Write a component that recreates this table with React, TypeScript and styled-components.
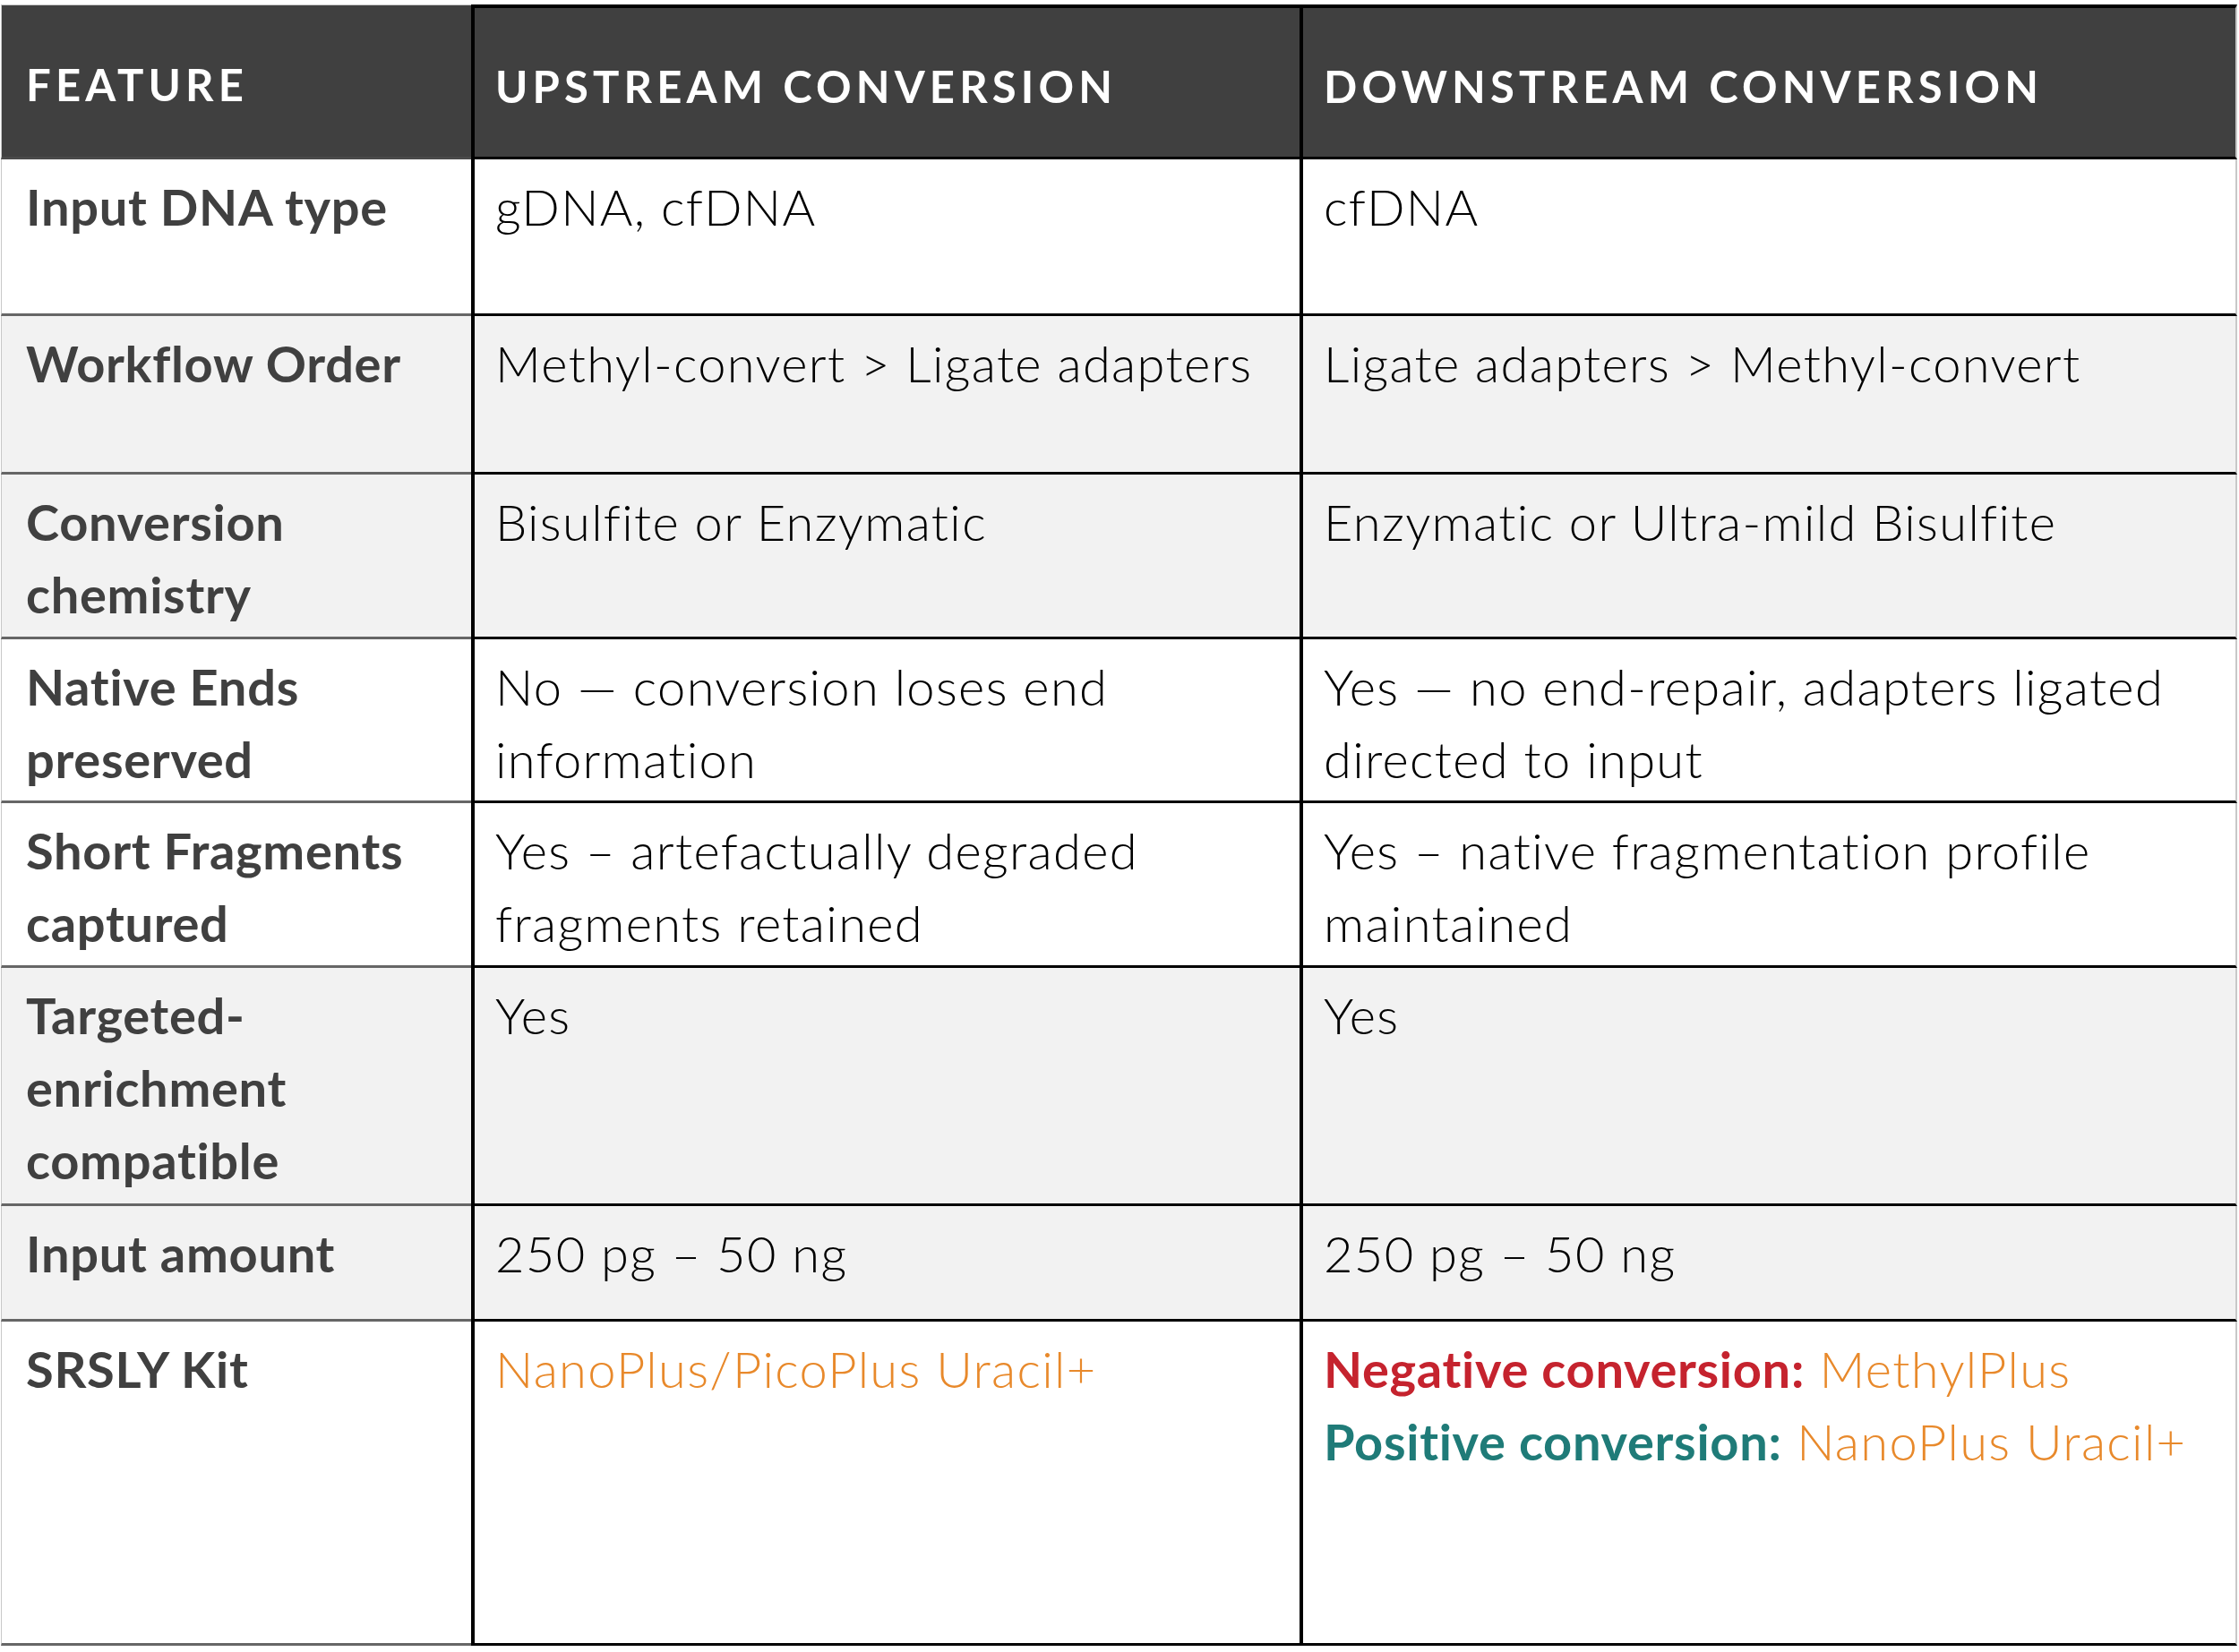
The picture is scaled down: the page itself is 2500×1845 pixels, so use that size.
import React from 'react';
import styled, {createGlobalStyle, css} from 'styled-components';

const GlobalStyle = createGlobalStyle`
	html, body {
		margin: 0;
		padding: 0;
		background: #ffffff;
	}
	body {
		font-family: Lato, "Open Sans", Arial, sans-serif;
	}
`;

const color = {
	header: '#404040',
	stripe: '#f2f2f2',
	white: '#ffffff',
	label: '#404040',
	text: '#000000',
	line: '#000000',
	labelLine: '#666666',
	edge: '#c8c8c8',
	orange: '#e8892b',
	red: '#c5232e',
	teal: '#1f7b78',
};

type Row = {
	label: React.ReactNode;
	upstream: React.ReactNode;
	downstream: React.ReactNode;
	height: number;
	striped?: boolean;
};

const getRows = (): Row[] => [
	{label: 'Input DNA type', upstream: 'gDNA, cfDNA', downstream: 'cfDNA', height: 175},
	{
		label: 'Workflow Order',
		upstream: 'Methyl-convert > Ligate adapters',
		downstream: 'Ligate adapters > Methyl-convert',
		height: 177,
		striped: true,
	},
	{
		label: <>Conversion<br />chemistry</>,
		upstream: 'Bisulfite or Enzymatic',
		downstream: 'Enzymatic or Ultra-mild Bisulfite',
		height: 184,
		striped: true,
	},
	{
		label: <>Native Ends<br />preserved</>,
		upstream: <>No — conversion loses end<br />information</>,
		downstream: <>Yes — no end-repair, adapters ligated<br />directed to input</>,
		height: 183,
	},
	{
		label: <>Short Fragments<br />captured</>,
		upstream: <>Yes – artefactually degraded<br />fragments retained</>,
		downstream: <>Yes – native fragmentation profile<br />maintained</>,
		height: 184,
	},
	{
		label: <>Targeted-<br />enrichment<br />compatible</>,
		upstream: 'Yes',
		downstream: 'Yes',
		height: 266,
		striped: true,
	},
	{
		label: 'Input amount',
		upstream: '250 pg – 50 ng',
		downstream: '250 pg – 50 ng',
		height: 129,
		striped: true,
	},
	{
		label: 'SRSLY Kit',
		upstream: <Kit>NanoPlus/PicoPlus Uracil+</Kit>,
		downstream: (
			<>
				<Tag $tone="red">Negative conversion:</Tag> <Kit>MethylPlus</Kit>
				<br />
				<Tag $tone="teal">Positive conversion:</Tag> <Kit>NanoPlus Uracil+</Kit>
			</>
		),
		height: 362,
	},
];

const App = () => {
	const rows = getRows();

	return (
		<>
			<GlobalStyle />
			<Page>
				<Table $rows={[173, ...rows.map((r) => r.height)]}>
					<HeadCell $first>FEATURE</HeadCell>
					<HeadCell>UPSTREAM CONVERSION</HeadCell>
					<HeadCell $last>DOWNSTREAM CONVERSION</HeadCell>
					{rows.map((row, i) => (
						<React.Fragment key={i}>
							<LabelCell $striped={row.striped}>{row.label}</LabelCell>
							<ValueCell $striped={row.striped}>{row.upstream}</ValueCell>
							<ValueCell $striped={row.striped} $last>{row.downstream}</ValueCell>
						</React.Fragment>
					))}
				</Table>
			</Page>
		</>
	);
};

export default App;

const Page = styled.div`
	width: 2500px;
	height: 1845px;
	padding-top: 5px;
	box-sizing: border-box;
	background: ${color.white};
`;

const Table = styled.div<{ $rows: number[] }>`
	display: grid;
	grid-template-columns: 525px 925px 1047px;
	grid-template-rows: ${({$rows}) => $rows.map((h) => `${h}px`).join(' ')};
	width: 2497px;
	margin-left: 1px;
`;

const cellBase = css`
	box-sizing: border-box;
	font-size: 56px;
	line-height: 81px;
	letter-spacing: 0.0125em;
	overflow: hidden;
`;

const HeadCell = styled.div<{ $first?: boolean; $last?: boolean }>`
	${cellBase};
	display: flex;
	align-items: center;
	padding: 8px 20px 0 ${({$first}) => ($first ? '27px' : '23px')};
	background: ${color.header};
	color: ${color.white};
	font-weight: 700;
	font-size: 49px;
	letter-spacing: 0.105em;
	white-space: nowrap;
	border-bottom: 3px solid ${({$first}) => ($first ? '#4a4a4a' : color.line)};
	${({$first}) =>
		$first
			? css`
					border-top: 1px solid ${color.edge};
					border-left: 1px solid ${color.edge};
			  `
			: css`
					border-top: 4px solid ${color.line};
					border-left: 4px solid ${color.line};
			  `}
	${({$last}) =>
		$last &&
		css`
			border-right: 2px solid ${color.edge};
		`}
`;

const LabelCell = styled.div<{ $striped?: boolean }>`
	${cellBase};
	padding: 12px 8px 0 27px;
	background: ${({$striped}) => ($striped ? color.stripe : color.white)};
	color: ${color.label};
	font-weight: 700;
	white-space: nowrap;
	border-left: 1px solid ${color.edge};
	border-bottom: 3px solid ${color.labelLine};
`;

const ValueCell = styled.div<{ $striped?: boolean; $last?: boolean }>`
	${cellBase};
	padding: 12px 8px 0 23px;
	background: ${({$striped}) => ($striped ? color.stripe : color.white)};
	color: ${color.text};
	font-weight: 300;
	letter-spacing: 0.024em;
	white-space: nowrap;
	border-left: 4px solid ${color.line};
	border-bottom: 3px solid ${color.line};
	${({$last}) =>
		$last &&
		css`
			border-right: 2px solid ${color.edge};
		`}
`;

const Kit = styled.span`
	color: ${color.orange};
	font-weight: 300;
`;

const Tag = styled.span<{ $tone: 'red' | 'teal' }>`
	color: ${({$tone}) => ($tone === 'red' ? color.red : color.teal)};
	font-weight: 700;
	letter-spacing: 0.0125em;
`;
